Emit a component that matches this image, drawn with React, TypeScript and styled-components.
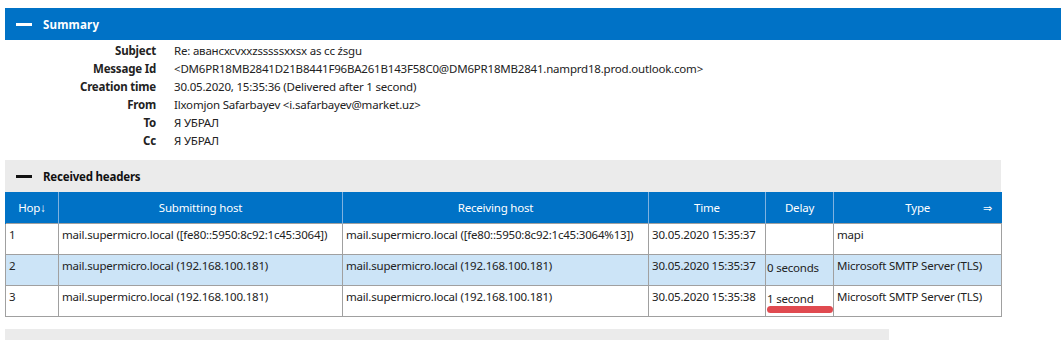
import React from 'react'
import styled, { createGlobalStyle } from 'styled-components'

const GlobalStyle = createGlobalStyle`
    body {
        margin: 0;
        background: #fff;
        font-family: "Noto Sans", "Open Sans", sans-serif;
        font-size: 11.5px;
        letter-spacing: -0.2px;
        color: #222;
    }
`

const Page = styled.div`
    padding: 8px 0 0 5px;
    width: 1056px;
`

const SectionBar = styled.div<{ $dark?: boolean }>`
    display: flex;
    align-items: center;
    gap: 11px;
    height: 32px;
    padding-left: 11px;
    box-sizing: border-box;
    background: ${p => (p.$dark ? '#0072c6' : '#ebebeb')};
    color: ${p => (p.$dark ? '#fff' : '#111')};
    font-weight: 700;
    font-size: 11.5px;
    letter-spacing: ${p => (p.$dark ? '0.2px' : '-0.2px')};
`

const Dash = styled.span<{ $dark?: boolean }>`
    width: 16px;
    height: 3px;
    background: ${p => (p.$dark ? '#fff' : '#111')};
`

const SummaryGrid = styled.div`
    display: grid;
    grid-template-columns: 151px 1fr;
    column-gap: 18px;
    padding-top: 2px;
    margin-bottom: 10px;
`

const Label = styled.div`
    text-align: right;
    font-weight: 700;
    line-height: 18px;
    white-space: nowrap;
`

const Value = styled.div`
    line-height: 18px;
    white-space: nowrap;
`

const Section = styled.div`
    width: 996px;
`

const Table = styled.table`
    width: 996px;
    border-collapse: collapse;
    table-layout: fixed;
`

const Th = styled.th`
    position: relative;
    height: 31px;
    padding: 0;
    background: #0072c6;
    color: #fff;
    font-weight: 400;
    text-align: center;
    border-left: 1px solid #7fb2e0;
    &:first-child {
        border-left: 1px solid #0072c6;
    }
`

const SortArrow = styled.span`
    position: absolute;
    right: 10px;
    top: 8px;
    font-size: 11px;
`

const Row = styled.tr<{ $alt?: boolean }>`
    background: ${p => (p.$alt ? '#cce4f7' : '#fff')};
`

const Td = styled.td<{ $delay?: boolean }>`
    position: relative;
    height: 31px;
    box-sizing: border-box;
    padding: ${p => (p.$delay ? '5px 0 0 1px' : '3px 3px 0 3px')};
    border: 1px solid #a0a0a0;
    vertical-align: top;
    line-height: 16px;
    white-space: nowrap;
    overflow: hidden;
`

const Highlight = styled.span`
    position: absolute;
    left: 1px;
    right: 0;
    bottom: 3px;
    height: 7px;
    border-radius: 4px;
    background: #e04a50;
`

const Footer = styled.div`
    width: 884px;
    height: 11px;
    margin-top: 12px;
    background: #ebebeb;
`

const summary = [
    { label: 'Subject', value: 'Re: авансхсvxxzsssssxxsx as cc źsgu' },
    { label: 'Message Id', value: '<DM6PR18MB2841D21B8441F96BA261B143F58C0@DM6PR18MB2841.namprd18.prod.outlook.com>' },
    { label: 'Creation time', value: '30.05.2020, 15:35:36 (Delivered after 1 second)' },
    { label: 'From', value: 'Ilxomjon Safarbayev <i.safarbayev@market.uz>' },
    { label: 'To', value: 'Я УБРАЛ' },
    { label: 'Cc', value: 'Я УБРАЛ' },
]

const columns = [
    { title: 'Hop↓', width: 53 },
    { title: 'Submitting host', width: 284 },
    { title: 'Receiving host', width: 306 },
    { title: 'Time', width: 117 },
    { title: 'Delay', width: 68 },
    { title: 'Type', width: 168 },
]

const hops = [
    {
        hop: '1',
        from: 'mail.supermicro.local ([fe80::5950:8c92:1c45:3064])',
        by: 'mail.supermicro.local ([fe80::5950:8c92:1c45:3064%13])',
        time: '30.05.2020 15:35:37',
        delay: '',
        type: 'mapi',
    },
    {
        hop: '2',
        from: 'mail.supermicro.local (192.168.100.181)',
        by: 'mail.supermicro.local (192.168.100.181)',
        time: '30.05.2020 15:35:37',
        delay: '0 seconds',
        type: 'Microsoft SMTP Server (TLS)',
    },
    {
        hop: '3',
        from: 'mail.supermicro.local (192.168.100.181)',
        by: 'mail.supermicro.local (192.168.100.181)',
        time: '30.05.2020 15:35:38',
        delay: '1 second',
        type: 'Microsoft SMTP Server (TLS)',
        marked: true,
    },
]

const App = () => {
    return (
        <>
            <GlobalStyle />
            <Page>
                <SectionBar $dark>
                    <Dash $dark />
                    Summary
                </SectionBar>
                <SummaryGrid>
                    {summary.map(s => (
                        <React.Fragment key={s.label}>
                            <Label>{s.label}</Label>
                            <Value>{s.value}</Value>
                        </React.Fragment>
                    ))}
                </SummaryGrid>
                <Section>
                    <SectionBar>
                        <Dash />
                        Received headers
                    </SectionBar>
                    <Table>
                        <colgroup>
                            {columns.map(c => (
                                <col key={c.title} style={{ width: c.width }} />
                            ))}
                        </colgroup>
                        <thead>
                            <tr>
                                {columns.map(c => (
                                    <Th key={c.title}>
                                        {c.title}
                                        {c.title === 'Type' && <SortArrow>⇒</SortArrow>}
                                    </Th>
                                ))}
                            </tr>
                        </thead>
                        <tbody>
                            {hops.map((h, i) => (
                                <Row key={h.hop} $alt={i === 1}>
                                    <Td>{h.hop}</Td>
                                    <Td>{h.from}</Td>
                                    <Td>{h.by}</Td>
                                    <Td>{h.time}</Td>
                                    <Td $delay>
                                        {h.delay}
                                        {h.marked && <Highlight />}
                                    </Td>
                                    <Td>{h.type}</Td>
                                </Row>
                            ))}
                        </tbody>
                    </Table>
                </Section>
                <Footer />
            </Page>
        </>
    )
}

export default App
